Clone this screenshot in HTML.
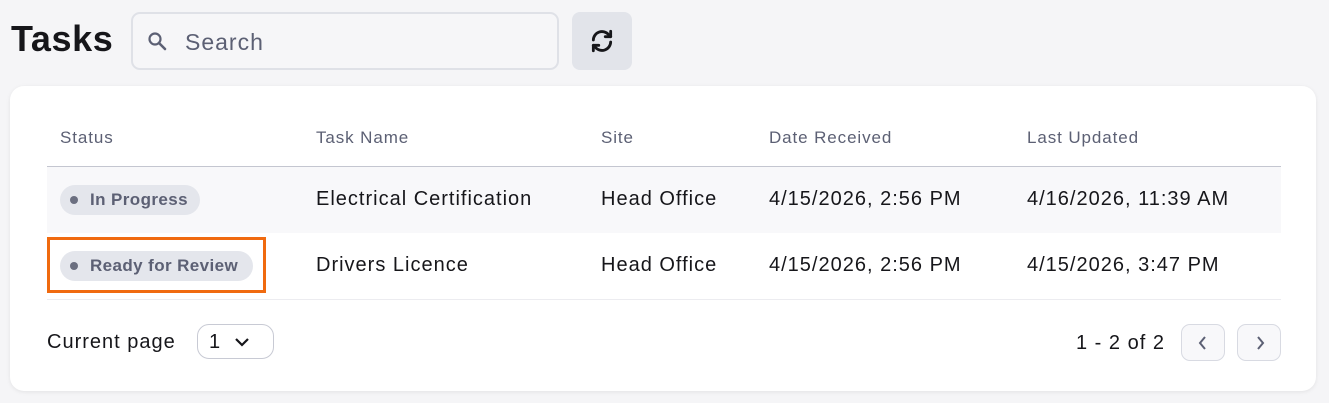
<!DOCTYPE html>
<html><head><style>
body{margin:0;width:1329px;height:403px;background:#f5f5f7;font-family:"Liberation Sans",sans-serif;position:relative;overflow:hidden;color:#1a1a1f}
.abs{position:absolute}
h1{position:absolute;left:11px;top:18px;margin:0;font-size:36px;font-weight:bold;letter-spacing:0.6px;color:#16161a}
.search{left:131px;top:12px;width:428px;height:58px;border:2px solid #dfe1e7;border-radius:9px;background:#f6f6f8;box-sizing:border-box}
.search span{position:absolute;left:52px;top:15px;font-size:23px;color:#5c6074;letter-spacing:1px}
.ref{left:572px;top:12px;width:60px;height:58px;background:#e2e4ea;border-radius:8px}
.card{left:10px;top:86px;width:1306px;height:305px;background:#fff;border-radius:14px;box-shadow:0 1px 4px rgba(0,0,0,.08)}
.th{top:128px;font-size:17px;color:#5c6074;letter-spacing:0.9px}
.line{left:47px;width:1234px;height:1px}
.row1{left:47px;top:167px;width:1234px;height:66px;background:#f8f8fa}
.td{font-size:20px;color:#16161a;letter-spacing:1px}
.pill{height:30px;border-radius:15px;background:#e4e6ec;font-size:17px;font-weight:bold;color:#5c6074;line-height:30px;box-sizing:border-box;padding-left:30px;letter-spacing:0.4px}
.pill:before{content:"";position:absolute;left:10px;top:11px;width:8px;height:8px;border-radius:50%;background:#6b6f80}
.btn{width:44px;height:37px;border:1px solid #d8dae2;border-radius:9px;background:#f8f8fa;box-sizing:border-box}
</style></head><body>
<h1>Tasks</h1>
<div class="abs search"><svg class="abs" style="left:14px;top:17px" width="22" height="22" viewBox="0 0 22 22"><circle cx="8" cy="8" r="5.5" fill="none" stroke="#5c6074" stroke-width="2.2"/><path d="M12 12l6 6" stroke="#5c6074" stroke-width="2.6" stroke-linecap="round"/></svg><span>Search</span></div>
<div class="abs ref"><svg class="abs" style="left:17px;top:16px" width="26" height="26" viewBox="0 0 24 24" fill="none" stroke="#16161a" stroke-width="2.6" stroke-linecap="round" stroke-linejoin="round"><path d="M4 11a8 8 0 0 1 14-5l2 2"/><path d="M20 3v5h-5"/><path d="M20 13a8 8 0 0 1-14 5l-2-2"/><path d="M4 21v-5h5"/></svg></div>
<div class="abs card"></div>
<div class="abs th" style="left:60px">Status</div>
<div class="abs th" style="left:316px">Task Name</div>
<div class="abs th" style="left:601px">Site</div>
<div class="abs th" style="left:769px">Date Received</div>
<div class="abs th" style="left:1027px">Last Updated</div>
<div class="abs line" style="top:166px;background:#c4c6d0"></div>
<div class="abs row1"></div>
<div class="abs line" style="top:299px;background:#ececf0"></div>
<div class="abs pill" style="left:60px;top:185px;width:140px">In Progress</div>
<div class="abs" style="left:47px;top:237px;width:219px;height:56px;border:3px solid #f06a0f;box-sizing:border-box"></div>
<div class="abs pill" style="left:60px;top:251px;width:193px">Ready for Review</div>
<div class="abs td" style="left:316px;top:188px">Electrical Certification</div>
<div class="abs td" style="left:601px;top:188px">Head Office</div>
<div class="abs td" style="left:769px;top:188px">4/15/2026, 2:56 PM</div>
<div class="abs td" style="left:1027px;top:188px">4/16/2026, 11:39 AM</div>
<div class="abs td" style="left:316px;top:254px">Drivers Licence</div>
<div class="abs td" style="left:601px;top:254px">Head Office</div>
<div class="abs td" style="left:769px;top:254px">4/15/2026, 2:56 PM</div>
<div class="abs td" style="left:1027px;top:254px">4/15/2026, 3:47 PM</div>
<div class="abs td" style="left:47px;top:331px">Current page</div>
<div class="abs" style="left:197px;top:324px;width:77px;height:35px;border:1px solid #c8cad4;border-radius:12px;box-sizing:border-box"><span class="abs td" style="left:11px;top:6px">1</span><svg class="abs" style="left:36px;top:11px" width="16" height="12" viewBox="0 0 16 12"><path d="M2 3l6 6 6-6" fill="none" stroke="#16161a" stroke-width="2.2"/></svg></div>
<div class="abs td" style="left:1076px;top:332px">1 - 2 of 2</div>
<div class="abs btn" style="left:1181px;top:324px"><svg class="abs" style="left:15px;top:10px" width="12" height="16" viewBox="0 0 12 16"><path d="M8 2L3 8l5 6" fill="none" stroke="#5c6074" stroke-width="2"/></svg></div>
<div class="abs btn" style="left:1237px;top:324px"><svg class="abs" style="left:16px;top:10px" width="12" height="16" viewBox="0 0 12 16"><path d="M4 2l5 6-5 6" fill="none" stroke="#5c6074" stroke-width="2"/></svg></div>
</body></html>
